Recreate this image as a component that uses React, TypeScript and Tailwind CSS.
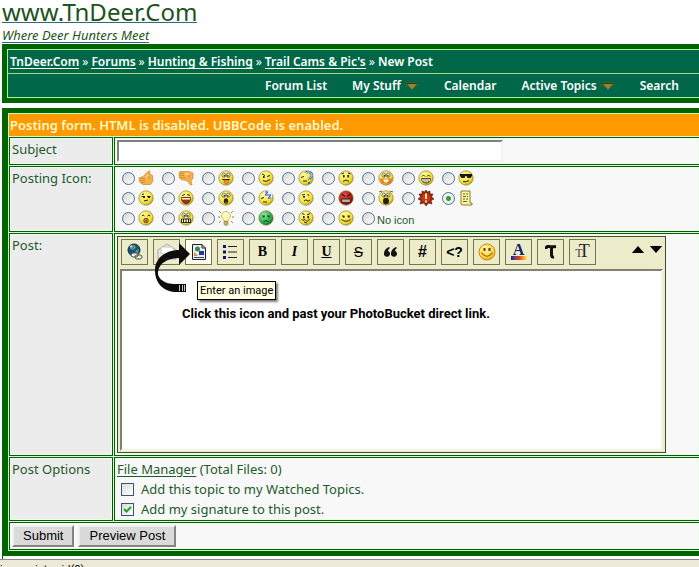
import type { ReactNode } from 'react';

const FONT = "font-['Noto_Sans','Liberation_Sans',sans-serif]";

function Ball({ tone = 'yellow', children }: { tone?: 'yellow' | 'red' | 'green'; children?: ReactNode }) {
  return (
    <svg viewBox="0 0 16 16" className="size-4 shrink-0" aria-hidden="true">
      <circle cx="8" cy="8" r="7.2" fill={`url(#ball-${tone})`} stroke="#857515" strokeWidth="0.6" />
      {children}
    </svg>
  );
}

const ink = '#29200a';
const Eyes = ({ y = 6 }: { y?: number }) => (
  <g fill={ink}>
    <rect x="5" y={y - 1} width="1.6" height="2.4" />
    <rect x="9.4" y={y - 1} width="1.6" height="2.4" />
  </g>
);
const BigEyes = () => (
  <g>
    <ellipse cx="5.8" cy="5.2" rx="1.8" ry="2.1" fill="#fff" stroke={ink} strokeWidth="0.6" />
    <ellipse cx="10.2" cy="5.2" rx="1.8" ry="2.1" fill="#fff" stroke={ink} strokeWidth="0.6" />
    <rect x="5.6" y="5" width="1.3" height="1.6" fill={ink} />
    <rect x="9.2" y="5" width="1.3" height="1.6" fill={ink} />
  </g>
);
const Line = ({ d, c = ink, w = 1 }: { d: string; c?: string; w?: number }) => (
  <path d={d} fill="none" stroke={c} strokeWidth={w} />
);

function Thumb({ down = false }: { down?: boolean }) {
  return (
    <svg viewBox="0 0 16 16" className="size-4 shrink-0" aria-hidden="true">
      <path
        d={
          down
            ? 'M1 3 2 1.500H11L15 3V8L13 11 14 15 12 14.500 9 10.500 3 9.500 1.500 8Z'
            : 'M1 8 5 6.500 10 1.500 12 1 11.500 4 14.500 5.500 15 11 12.500 14.500H5L2.500 13 1.500 11Z'
        }
        fill="#f4b04c"
        stroke="#c9862c"
        strokeWidth="0.7"
      />
      <path
        d={down ? 'M2 3.500H6M1.500 5.500H6M2 7.500H7M11 4V8' : 'M2 8.500H7M2 10.500H7M3 12.500H7M10 6 12 9'}
        stroke="#d48f35"
        fill="none"
      />
      <path d={down ? 'M7 3H11V5H7Z' : 'M7 7 10 4V7Z'} fill="#ffd486" />
    </svg>
  );
}

const Zs = ({ x, y }: { x: number; y: number }) => (
  <g transform={`translate(${x} ${y})`}>
    <path d="M-1-1H7V6H2Z" fill="#e8efff" />
    <path d="M0 0H3L0 3H3M3 3H6L3 6H6" fill="none" stroke="#2a4fb0" />
  </g>
);

const postIcons: { name: string; art: ReactNode }[] = [
  { name: 'Thumbs up', art: <Thumb /> },
  { name: 'Thumbs down', art: <Thumb down /> },
  { name: 'Tongue', art: <Ball><BigEyes /><Line d="M4 9.500H12" /><path d="M6 10H10.500V12.500L9 14H7.500L6 12.500Z" fill="#f08a3c" stroke="#a2511c" strokeWidth=".5" /></Ball> },
  { name: 'Wink', art: <Ball><Line d="M4 4 7 5.500M9 6.500 12 5.500" /><rect x="5" y="6" width="1.600" height="2" fill={ink} /><Line d="M5 10.500 8 11.500 12 9.500" /></Ball> },
  { name: 'Puzzled', art: <Ball><Line d="M3 7.500 6 6.500M5 11H9" /><path d="M8 3C9 1 14 2 14 5S11 8 11 10" fill="none" stroke="#3d5fae" strokeWidth="2.400" /><path d="M8 3C9 1 14 2 14 5S11 8 11 10" fill="none" stroke="#dfe8ff" /><rect x="10" y="12" width="2" height="2" fill="#4666aa" /></Ball> },
  { name: 'Sad', art: <Ball><Line d="M3.500 4 6 3M10 3 12.500 4" /><Eyes /><Line d="M5 11.500Q8 8.500 11 11.500" /></Ball> },
  { name: 'Blush', art: <Ball><BigEyes /><path d="M1.500 8.500H14.500L12 13.500H4Z" fill="#ea5b18" opacity=".75" /><path d="M5 9.500H11Q10 12.500 8 12.500T5 9.500" fill="#fff" /></Ball> },
  { name: 'Grin', art: <Ball><Line d="M4 6.500Q5.500 3.500 7 6.500M9 6.500Q10.500 3.500 12 6.500" /><path d="M3.500 8.500H12.500Q12 13 8 13T3.500 8.500" fill="#fff" stroke={ink} strokeWidth=".8" /><Line d="M6 9V12.500M8 9V13M10 9V12.500" w={0.6} /></Ball> },
  { name: 'Cool', art: <Ball><path d="M2 4H14V6L12.500 8H9.500L8.500 6H7.500L6.500 8H3.500L2 6Z" fill="#181818" /><Line d="M5 11.500Q8 12.500 11 10.500" /></Ball> },
  { name: 'Smirk', art: <Ball><Line d="M3.500 6.500H7M9 6.500H12.500M6 11 10 10M4 4.500 6 4" /><rect x="5" y="7" width="2" height="1" fill={ink} /><rect x="10" y="7" width="2" height="1" fill={ink} /></Ball> },
  { name: 'Laugh', art: <Ball><Line d="M4 5.500 7 4.500M9 4.500 12 5.500" /><path d="M3.500 7.500H12.500Q12.500 13.500 8 13.500T3.500 7.500" fill="#b52714" stroke={ink} strokeWidth=".7" /><path d="M4 8H12V9.500H4Z" fill="#fff" /></Ball> },
  { name: 'Shocked', art: <Ball><BigEyes /><ellipse cx="8" cy="11" rx="2.200" ry="2.800" fill={ink} /><ellipse cx="8" cy="12" rx="1" ry="1" fill="#a04020" /></Ball> },
  { name: 'Sleepy', art: <Ball><Line d="M3 8.500 6 7.500M5 12H9" /><Zs x={7} y={2} /></Ball> },
  { name: 'Confused', art: <Ball><Line d="M4 5 7 4.500M9.500 4 11 6M6 11Q8 9 9 10.500T12 10" /><rect x="5" y="6" width="2" height="1.600" fill={ink} /></Ball> },
  { name: 'Mad', art: <Ball tone="red"><Line d="M3.500 4 7 6.500M12.500 4 9 6.500" w={1.3} /><path d="M4 9H12V12.500H4Z" fill="#fff" stroke="#300" strokeWidth=".8" /><Line d="M6 9V12M8 9V12M10 9V12" w={0.7} /></Ball> },
  { name: 'Crazy', art: <Ball><BigEyes /><ellipse cx="8" cy="11" rx="3" ry="3.200" fill={ink} /><Line d="M1 2 4 1M15 2 12 1" c="#555" /></Ball> },
  {
    name: 'Exclamation',
    art: (
      <svg viewBox="0 0 16 16" className="size-4 shrink-0" aria-hidden="true">
        <path d="M8 0 9.500 2 12 1V4L15 4 13.500 7 16 9 13 10.500 14 14 10.500 13 8 16 6 13 2 14 3 10.500 0 9 2.500 7 1 4 4 4V1L6.500 2Z" fill="#9c2410" stroke="#4f1408" strokeWidth=".6" />
        <circle cx="8" cy="8" r="4.500" fill="#c33a18" />
        <path d="M7 3.500H9V9H7ZM7 10.500H9V12.500H7Z" fill="#ffe9a0" />
      </svg>
    ),
  },
  {
    name: 'Note',
    art: (
      <svg viewBox="0 0 16 16" className="size-4 shrink-0" aria-hidden="true">
        <path d="M3 1H12V13H14V15H4L3 14Z" fill="#f8f3a4" stroke="#8b812b" />
        <path d="M5 4H7M8 4H10M5 6.500H8M9 6.500H10M5 9H7M8 9H10M5 11.500H9" stroke="#6e6520" />
      </svg>
    ),
  },
  { name: 'Whistle', art: <Ball><Line d="M4 6Q5 4 6.500 6M9.500 6Q11 4 12 6" /><circle cx="8" cy="10.500" r="2.200" fill="#f0a020" stroke={ink} strokeWidth=".8" /><rect x="7.500" y="10" width="1.200" height="1.200" fill={ink} /></Ball> },
  { name: 'Teeth', art: <Ball><BigEyes /><path d="M3.500 9H12.500V12.500H3.500Z" fill="#fff" stroke={ink} /><Line d="M5.500 9V12.500M8 9V12.500M10.500 9V12.500" /></Ball> },
  {
    name: 'Idea',
    art: (
      <svg viewBox="0 0 16 16" className="size-4 shrink-0" aria-hidden="true">
        <path d="M1 1 3 3M15 1 13 3M0 7H2M14 7H16M1 13 3 11M15 13 13 11" stroke="#8f874a" />
        <path d="M6 11C6 9 3.500 8.500 3.500 5.500A4.500 4 0 0 1 12.500 5.500C12.500 8.500 10 9 10 11Z" fill="#fffab8" stroke="#b8ac4a" strokeWidth=".8" />
        <path d="M6 11.500H10V14.500L8 15.500 6 14.500Z" fill="#c8b860" stroke="#7b703a" strokeWidth=".6" />
      </svg>
    ),
  },
  { name: 'Sick', art: <Ball tone="green"><Line d="M4 6H7M9 6H12M5.500 11.500Q8 9.500 10.500 11.500" c="#0c4a1d" /><rect x="5" y="6" width="1.500" height="1.500" fill="#0c4a1d" /><rect x="10" y="6" width="1.500" height="1.500" fill="#0c4a1d" /></Ball> },
  { name: 'Goofy', art: <Ball><Line d="M4 3.500 6.500 4.500M9 5 12 3.500M3.500 9 5 10.500 7 9.500 9 11.500 12 9M6 12 9 13" /><Eyes y={7} /></Ball> },
  { name: 'Smile', art: <Ball><Line d="M4 6H6.500M9.500 6H12M3.500 9.500Q8 13 12.500 9.500" /><rect x="5" y="6" width="1.500" height="1.600" fill={ink} /><rect x="10" y="6" width="1.500" height="1.600" fill={ink} /></Ball> },
];

const radioClass =
  "size-[13px] shrink-0 appearance-none rounded-full border border-[#4d6e90] bg-linear-to-br from-[#d6d6d0] to-white checked:bg-[radial-gradient(circle,#2fa02f_0_2px,#eef2ee_3px)]";
const checkClass =
  "size-[13px] shrink-0 appearance-none border border-[#33557f] bg-linear-to-br from-[#dcdcd7] to-white";

function DownMark() {
  return (
    <svg viewBox="0 0 14 8" className="h-2 w-3.5" aria-hidden="true">
      <path d="M0 2.500 3 0H11L14 2.500 7 8Z" fill="#2d6a2e" />
      <path d="M2 1.500H12L7 7.500Z" fill="#9c8136" />
      <path d="M2 1.500H12" stroke="#3b3210" />
    </svg>
  );
}

function NavLink({ children, menu = false }: { children: ReactNode; menu?: boolean }) {
  return (
    <a href="#" className="flex items-center gap-1 whitespace-nowrap">
      {children}
      {menu && <DownMark />}
    </a>
  );
}

const crumbs = ['TnDeer.Com', 'Forums', 'Hunting & Fishing', "Trail Cams & Pic's"];

const tools: { name: string; art: ReactNode; lit?: boolean }[] = [
  {
    name: 'Enter a URL',
    art: (
      <svg viewBox="0 0 18 18" className="size-[18px]">
        <circle cx="8" cy="7" r="6" fill="#1d4d8c" stroke="#12264a" />
        <path d="M5 2 9 2 10 5 7 7 4 6ZM10 7 13 6 12 11 9 10Z" fill="#4b9b6b" />
        <path d="M4 4 6 3" stroke="#bfe0f5" strokeWidth="1.500" />
        <rect x="5" y="10" width="7" height="4" rx="2" fill="#eee" stroke="#555" />
        <rect x="9" y="12" width="7" height="4" rx="2" fill="none" stroke="#555" />
      </svg>
    ),
  },
  {
    name: 'Enter an email address',
    art: (
      <svg viewBox="0 0 20 18" className="h-[18px] w-5">
        <path d="M1 7 10 1 19 7V16H1Z" fill="#e8e8e4" stroke="#aaa9a0" />
        <path d="M4 4H16V10L10 13 4 10Z" fill="#fff" stroke="#c4c4bc" />
        <path d="M1 16 8 11M19 16 12 11" stroke="#aaa9a0" />
      </svg>
    ),
  },
  {
    name: 'Enter an image',
    lit: true,
    art: (
      <svg viewBox="0 0 16 18" className="h-[18px] w-4">
        <path d="M1.500 1.500H11L14.500 5V16.500H1.500Z" fill="#e9eefb" stroke="#222" />
        <path d="M11 1.500V5H14.500" fill="none" stroke="#222" />
        <circle cx="6.500" cy="6" r="2.500" fill="#3c8f3c" />
        <path d="M8 8H13V12H8Z" fill="#2436a0" />
        <path d="M3 9 7 13H3Z" fill="#d2932b" />
        <path d="M3 14.500H13" stroke="#444" />
      </svg>
    ),
  },
  {
    name: 'List',
    art: (
      <svg viewBox="0 0 16 14" className="h-3.5 w-4">
        <path d="M0 0H3V3H0ZM0 5.500H3V8.500H0ZM0 11H3V14H0Z" fill="#10107c" />
        <path d="M5 1.500H14M5 7H14M5 12.500H14" stroke="#222" />
      </svg>
    ),
  },
  { name: 'Bold', art: <span className="font-['Liberation_Serif',serif] text-sm font-black">B</span> },
  { name: 'Italic', art: <span className="font-['Liberation_Serif',serif] text-sm font-bold italic">I</span> },
  { name: 'Underline', art: <span className="font-['Liberation_Serif',serif] text-sm font-bold underline">U</span> },
  { name: 'Strikethrough', art: <span className="font-['Liberation_Sans',sans-serif] text-sm line-through">S</span> },
  {
    name: 'Quote',
    art: (
      <svg viewBox="0 0 14 10" className="h-2.5 w-3.5">
        <path d="M5 0Q0 2 0 6.500A3 3 0 1 0 4 4Q4 2 6 1ZM12 0Q7 2 7 6.500A3 3 0 1 0 11 4Q11 2 13 1Z" fill="#111" />
      </svg>
    ),
  },
  { name: 'Code', art: <span className="font-['Liberation_Sans',sans-serif] text-base font-bold">#</span> },
  { name: 'PHP', art: <span className="font-['Liberation_Sans',sans-serif] text-sm font-bold">&lt;?</span> },
  {
    name: 'Smilies',
    art: (
      <svg viewBox="0 0 18 18" className="size-[18px]">
        <circle cx="9" cy="9" r="8" fill="url(#smiley)" stroke="#c98a1e" />
        <path d="M5.500 5H7.500V8H5.500ZM10.500 5H12.500V8H10.500Z" fill="#5b3a08" />
        <path d="M3.500 9.500Q9 17 14.500 9.500" fill="none" stroke="#9a5a10" strokeWidth="1.200" />
      </svg>
    ),
  },
  {
    name: 'Font color',
    art: (
      <span className="flex flex-col items-center">
        <span className="font-['Liberation_Serif',serif] text-base leading-3 font-bold text-[#10206c]">A</span>
        <span className="h-1 w-4 bg-linear-to-r from-[#10108c] via-[#e0301c] to-[#ffe848]" />
      </span>
    ),
  },
  {
    name: 'Font face',
    art: (
      <svg viewBox="0 0 12 14" className="h-3.5 w-3">
        <path d="M1 4Q1 1 4 1.500T11 1.500M6.500 2V10Q6.500 12.500 9 12" fill="none" stroke="#111" strokeWidth="3" />
      </svg>
    ),
  },
  {
    name: 'Font size',
    art: (
      <span className="flex items-baseline font-['Liberation_Serif',serif] text-[#444]">
        <span className="text-xs">T</span>
        <span className="-ml-1 text-lg leading-4 text-[#222]">T</span>
      </span>
    ),
  },
];

const cell = 'border border-[#0b5a0b] shadow-[inset_0_0_0_1px_#e9fde9]';
const label = `${cell} bg-[#ececec] px-0.5 pt-px leading-5`;
const field = `${cell} border-r-0 bg-[#f8f8f8]`;
const push =
  "h-[22px] border-2 border-t-[#f0f0f0] border-r-[#848484] border-b-[#848484] border-l-[#f0f0f0] bg-[#dadada] font-['Liberation_Sans',sans-serif] text-[13px] leading-4 text-black";

export default function App() {
  return (
    <div className={`${FONT} overflow-hidden bg-white text-[13px] text-[#1d5a2c]`}>
      <svg className="absolute size-0" aria-hidden="true">
        <defs>
          <radialGradient id="ball-yellow" cx=".35" cy=".3" r=".8"><stop offset="0" stopColor="#fffca0" /><stop offset=".7" stopColor="#f0dc34" /><stop offset="1" stopColor="#a58e18" /></radialGradient>
          <radialGradient id="ball-red" cx=".35" cy=".3" r=".8"><stop offset="0" stopColor="#e85050" /><stop offset=".6" stopColor="#b81c1c" /><stop offset="1" stopColor="#600c0c" /></radialGradient>
          <radialGradient id="ball-green" cx=".35" cy=".3" r=".8"><stop offset="0" stopColor="#90eaa0" /><stop offset=".6" stopColor="#35b050" /><stop offset="1" stopColor="#116028" /></radialGradient>
          <radialGradient id="smiley" cx=".4" cy=".3" r=".8"><stop offset="0" stopColor="#fffbb0" /><stop offset=".6" stopColor="#ffd83c" /><stop offset="1" stopColor="#e8951c" /></radialGradient>
        </defs>
      </svg>

      <header className="flex h-11 flex-col items-start gap-1 pl-0.5">
        <a href="#" className="h-[23px] border-b border-[#2a6a7c] text-2xl leading-[23px] text-[#1c5420]">www.TnDeer.Com</a>
        <a href="#" className="h-4 border-b border-[#2a6a7c] leading-4 text-[#1c5420] italic">Where Deer Hunters Meet</a>
      </header>

      <div className="ml-0.5 bg-[#006400] py-[5px] pl-[5px]">
        <div className="border border-r-0 border-[#a8f0a0] bg-[#006848] text-xs font-semibold text-white">
          <nav aria-label="Breadcrumb" className="flex h-6 items-center gap-[3px] border-b border-[#a5d878] pl-0.5 whitespace-nowrap">
            {crumbs.map((c) => (
              <span key={c} className="flex items-center gap-[3px]">
                <a href="#" className="border-b border-white leading-[13px]">{c}</a>
                <span className="font-normal">»</span>
              </span>
            ))}
            <span>New Post</span>
          </nav>
          <nav aria-label="Forum" className="flex h-[23px] items-center justify-end gap-[25px] pr-5">
            <NavLink>Forum List</NavLink>
            <NavLink menu>My Stuff</NavLink>
            <NavLink>Calendar</NavLink>
            <NavLink menu>Active Topics</NavLink>
            <NavLink>Search</NavLink>
          </nav>
        </div>
      </div>

      <form className="mt-[5px] ml-0.5 bg-[#006400] py-[5px] pl-1.5">
        <div className="grid grid-cols-[104px_1fr] gap-px border border-r-0 border-[#c4f8bc] bg-[#d4fccc]">
          <h1 className="col-span-2 h-[22px] bg-[#ff9900] pl-px leading-[22px] font-semibold text-[#fff8cc]">
            Posting form. HTML is disabled. UBBCode is enabled.
          </h1>

          <label htmlFor="subject" className={label}>Subject</label>
          <div className={`${field} p-0.5`}>
            <input id="subject" className="block h-[22px] w-[386px] max-w-full border-2 border-t-[#808080] border-r-[#f4f4f4] border-b-[#f4f4f4] border-l-[#808080] bg-white px-1 outline-none" />
          </div>

          <div id="icon-label" className={label}>Posting Icon:</div>
          <div role="radiogroup" aria-labelledby="icon-label" className={`${field} grid grid-cols-[repeat(9,40px)] content-start pt-px pb-[3px] pl-[7px]`}>
            {postIcons.map(({ name, art }) => (
              <label key={name} className="flex h-5 items-center gap-[3px]">
                <input type="radio" name="icon" aria-label={name} defaultChecked={name === 'Note'} className={radioClass} />
                {art}
              </label>
            ))}
            <label className="flex h-5 items-center gap-0.5 whitespace-nowrap">
              <input type="radio" name="icon" className={radioClass} />
              <span className="pt-1 font-['Liberation_Sans',sans-serif] text-[11px] leading-4">No icon</span>
            </label>
          </div>

          <label htmlFor="post" className={label}>Post:</label>
          <div className={`${field} p-0.5`}>
            <div className="relative w-[549px] border border-[#3c5028] bg-[#ececca] px-0.5 pt-0.5 pb-px">
              <div className="flex items-start gap-[5px] pl-px">
                {tools.map(({ name, art, lit }) => (
                  <button
                    key={name}
                    type="button"
                    aria-label={name}
                    className={`flex h-[26px] w-[27px] shrink-0 items-center justify-center border border-[#76764a] text-black ${lit ? 'bg-[#fdfdf0]' : 'bg-[#ececca]'}`}
                  >
                    {art}
                  </button>
                ))}
                <div className="ml-auto flex gap-1 pt-[7px]">
                  <button type="button" aria-label="Shrink">
                    <svg viewBox="0 0 14 8" className="h-[7px] w-3.5"><path d="M7 0 14 8H0Z" /></svg>
                  </button>
                  <button type="button" aria-label="Grow">
                    <svg viewBox="0 0 14 8" className="h-[7px] w-3.5"><path d="M0 0H14L7 8Z" /></svg>
                  </button>
                </div>
              </div>
              <textarea id="post" className="mt-1 block h-[182px] w-full resize-none border-2 border-t-[#808074] border-r-[#f4f4e4] border-b-[#f4f4e4] border-l-[#808074] bg-white p-1 outline-none" />
              <svg viewBox="0 0 40 54" className="pointer-events-none absolute top-[5px] left-[34px] h-[54px] w-10" aria-hidden="true">
                <path d="M38 12 27 1V8C14 8 3 16 3 28 3 42 12 50 25 50V42C14 43 5 37 6 30 7 21 16 16 27 16V23Z" fill="#0c0c0c" />
                <path d="M24 42H34V50H24Z" fill="#0c0c0c" />
                <path d="M27.500 43V49M30.500 43V49M32.500 43V49" stroke="#fff" strokeWidth=".8" />
              </svg>
              <div role="tooltip" className="absolute top-11 left-[79px] border border-black bg-[#ffffe1] px-0.5 font-['Roboto',sans-serif] text-[11px] leading-[17px] whitespace-nowrap text-black shadow-[2px_2px_2px_#00000080]">
                Enter an image
              </div>
              <p className="absolute top-[68px] left-16 font-['Roboto',sans-serif] text-[13px] leading-[18px] font-bold whitespace-nowrap text-black">
                Click this icon and past your PhotoBucket direct link.
              </p>
            </div>
          </div>

          <div className={label}>Post Options</div>
          <div className={`${field} px-0.5 pt-px pb-px leading-5`}>
            <p><a href="#" className="underline underline-offset-2">File Manager</a> (Total Files: 0)</p>
            <label className="flex h-5 items-center gap-[7px] pl-1">
              <input type="checkbox" className={checkClass} />
              Add this topic to my Watched Topics.
            </label>
            <label className="flex h-5 items-center gap-[7px] pl-1">
              <span className="grid">
                <input type="checkbox" defaultChecked className={`${checkClass} col-start-1 row-start-1`} />
                <svg viewBox="0 0 13 13" className="pointer-events-none col-start-1 row-start-1 size-[13px]" aria-hidden="true">
                  <path d="M3 6 5.500 8.500 10 4" fill="none" stroke="#21a121" strokeWidth="2" />
                </svg>
              </span>
              Add my signature to this post.
            </label>
          </div>

          <div className={`${field} col-span-2 flex gap-1 px-0.5 py-0.5`}>
            <button type="submit" className={`${push} px-[9px]`}>Submit</button>
            <button type="button" className={`${push} px-[9px]`}>Preview Post</button>
          </div>
        </div>
      </form>

      <div className="ml-0.5 h-[3px] border-l border-[#006400]" />
      <footer className="h-2 overflow-hidden border-t border-[#8a8a86] bg-[#ece9d8] font-['Roboto',sans-serif] text-[11px] leading-4 text-black">
        <p className="pt-0.5">javascript:void(0)</p>
      </footer>
    </div>
  );
}
